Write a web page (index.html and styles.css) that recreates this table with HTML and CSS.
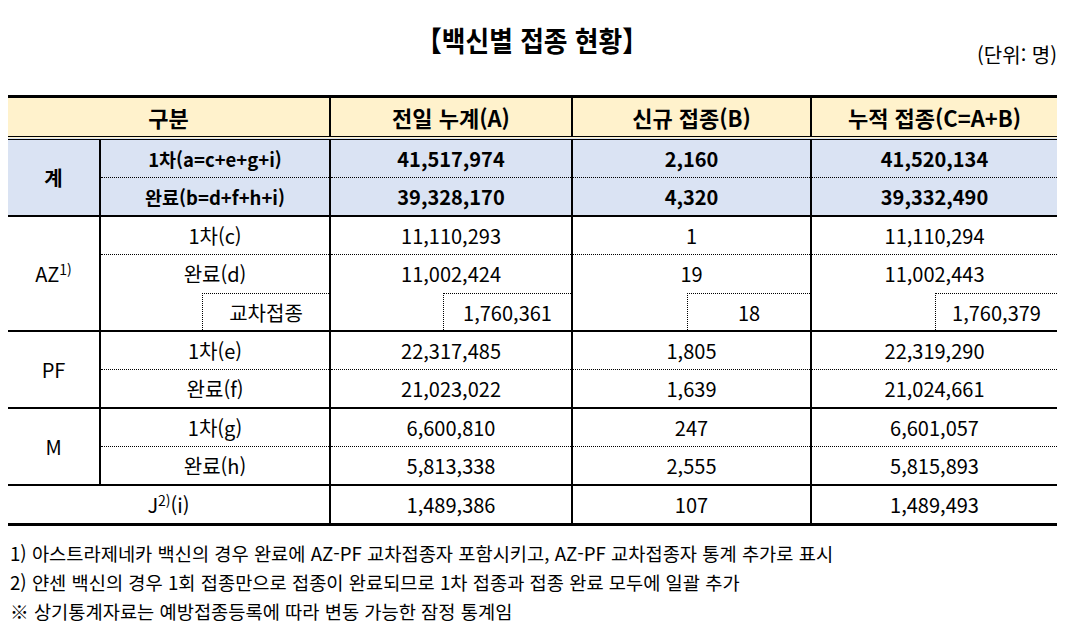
FILE: index.html
```html
<!DOCTYPE html>
<html lang="ko">
<head>
<meta charset="utf-8">
<title>백신별 접종 현황</title>
<link rel="stylesheet" href="styles.css">
</head>
<body>
<div class="page">
  <header class="head">
    <h1 class="title"><span class="title-text">【백신별 접종 현황】</span></h1>
    <div class="unit">(단위: 명)</div>
  </header>

  <table class="stats">
    <colgroup>
      <col class="c1"><col class="c2"><col class="c3"><col class="c4"><col class="c5">
    </colgroup>
    <thead>
      <tr>
        <th colspan="2" class="first">구분</th>
        <th>전일 누계(A)</th>
        <th>신규 접종(B)</th>
        <th>누적 접종(C=A+B)</th>
      </tr>
    </thead>
    <tbody>
      <tr class="total">
        <td rowspan="2" class="first">계</td>
        <td class="label">1차(a=c+e+g+i)</td>
        <td>41,517,974</td>
        <td>2,160</td>
        <td>41,520,134</td>
      </tr>
      <tr class="total dot">
        <td class="label">완료(b=d+f+h+i)</td>
        <td>39,328,170</td>
        <td>4,320</td>
        <td>39,332,490</td>
      </tr>

      <tr class="grp">
        <td rowspan="3" class="first">AZ<sup>1)</sup></td>
        <td>1차(c)</td>
        <td>11,110,293</td>
        <td>1</td>
        <td>11,110,294</td>
      </tr>
      <tr class="dot">
        <td>완료(d)</td>
        <td>11,002,424</td>
        <td>19</td>
        <td>11,002,443</td>
      </tr>
      <tr class="cross">
        <td><div class="sub sub-a">교차접종</div></td>
        <td><div class="sub sub-b">1,760,361</div></td>
        <td><div class="sub sub-c">18</div></td>
        <td><div class="sub sub-d">1,760,379</div></td>
      </tr>

      <tr class="grp">
        <td rowspan="2" class="first">PF</td>
        <td>1차(e)</td>
        <td>22,317,485</td>
        <td>1,805</td>
        <td>22,319,290</td>
      </tr>
      <tr class="dot">
        <td>완료(f)</td>
        <td>21,023,022</td>
        <td>1,639</td>
        <td>21,024,661</td>
      </tr>

      <tr class="grp">
        <td rowspan="2" class="first">M</td>
        <td>1차(g)</td>
        <td>6,600,810</td>
        <td>247</td>
        <td>6,601,057</td>
      </tr>
      <tr class="dot">
        <td>완료(h)</td>
        <td>5,813,338</td>
        <td>2,555</td>
        <td>5,815,893</td>
      </tr>

      <tr class="grp last">
        <td colspan="2" class="first">J<sup>2)</sup>(i)</td>
        <td>1,489,386</td>
        <td>107</td>
        <td>1,489,493</td>
      </tr>
    </tbody>
  </table>

  <div class="notes">
    <p>1) 아스트라제네카 백신의 경우 완료에 AZ-PF 교차접종자 포함시키고, AZ-PF 교차접종자 통계 추가로 표시</p>
    <p>2) 얀센 백신의 경우 1회 접종만으로 접종이 완료되므로 1차 접종과 접종 완료 모두에 일괄 추가</p>
    <p>※ 상기통계자료는 예방접종등록에 따라 변동 가능한 잠정 통계임</p>
  </div>
</div>
</body>
</html>
```

FILE: styles.css
```css
html, body {
  margin: 0;
  padding: 0;
  background: #ffffff;
}

body {
  font-family: "Noto Sans CJK KR", "Noto Sans", sans-serif;
  color: #000;
}

.page {
  width: 1049px;
  padding: 0 0 0 8px;
}

.head {
  display: flex;
  flex-direction: column;
  padding-top: 25px;
}

.title {
  margin: 0;
  height: 30px;
  line-height: 30px;
  text-align: center;
  font-size: 28px;
  font-weight: 700;
}

.title-text {
  display: inline-block;
  transform: scaleX(0.92);
}

.unit {
  margin-top: -11px;
  text-align: right;
  font-size: 20px;
  line-height: 22px;
}

.stats {
  margin-top: 29px;
  width: 1049px;
  border-collapse: collapse;
  table-layout: fixed;
  font-size: 20px;
}

.c1 { width: 92px; }
.c2 { width: 230px; }
.c3 { width: 242px; }
.c4 { width: 239px; }
.c5 { width: 246px; }

.stats th,
.stats td {
  padding: 0;
  text-align: center;
  vertical-align: middle;
  border-left: 2px solid #000;
  line-height: 24px;
}

.stats th.first,
.stats td.first {
  border-left: none;
}

.stats thead th {
  height: 38px;
  background: #fff2cc;
  font-size: 22px;
  font-weight: 700;
  border-top: 3px solid #000;
  border-bottom: 4px double #000;
}

.stats td {
  height: 37px;
}

.total td {
  background: #dae3f3;
  font-weight: 700;
}

.total td.label {
  font-size: 18.5px;
}

.dot td {
  border-top: 1px dotted #000;
}

.grp td {
  border-top: 2px solid #000;
}

.last td {
  border-bottom: 3px solid #000;
}

.cross td {
  border-top: none;
  height: 38px;
}

.sub {
  margin-left: auto;
  height: 37px;
  line-height: 37px;
  border-top: 1px dotted #000;
  border-left: 1px dotted #000;
  box-sizing: border-box;
}

.sub-a { width: 127px; }
.sub-b { width: 128px; }
.sub-c { width: 123px; }
.sub-d { width: 122px; }

sup {
  font-size: 0.7em;
  line-height: 0;
  vertical-align: 0.5em;
}

.notes {
  margin-top: 12px;
  font-size: 18.7px;
}

.notes p {
  margin: 0;
  line-height: 29px;
  padding-left: 2px;
}
```
